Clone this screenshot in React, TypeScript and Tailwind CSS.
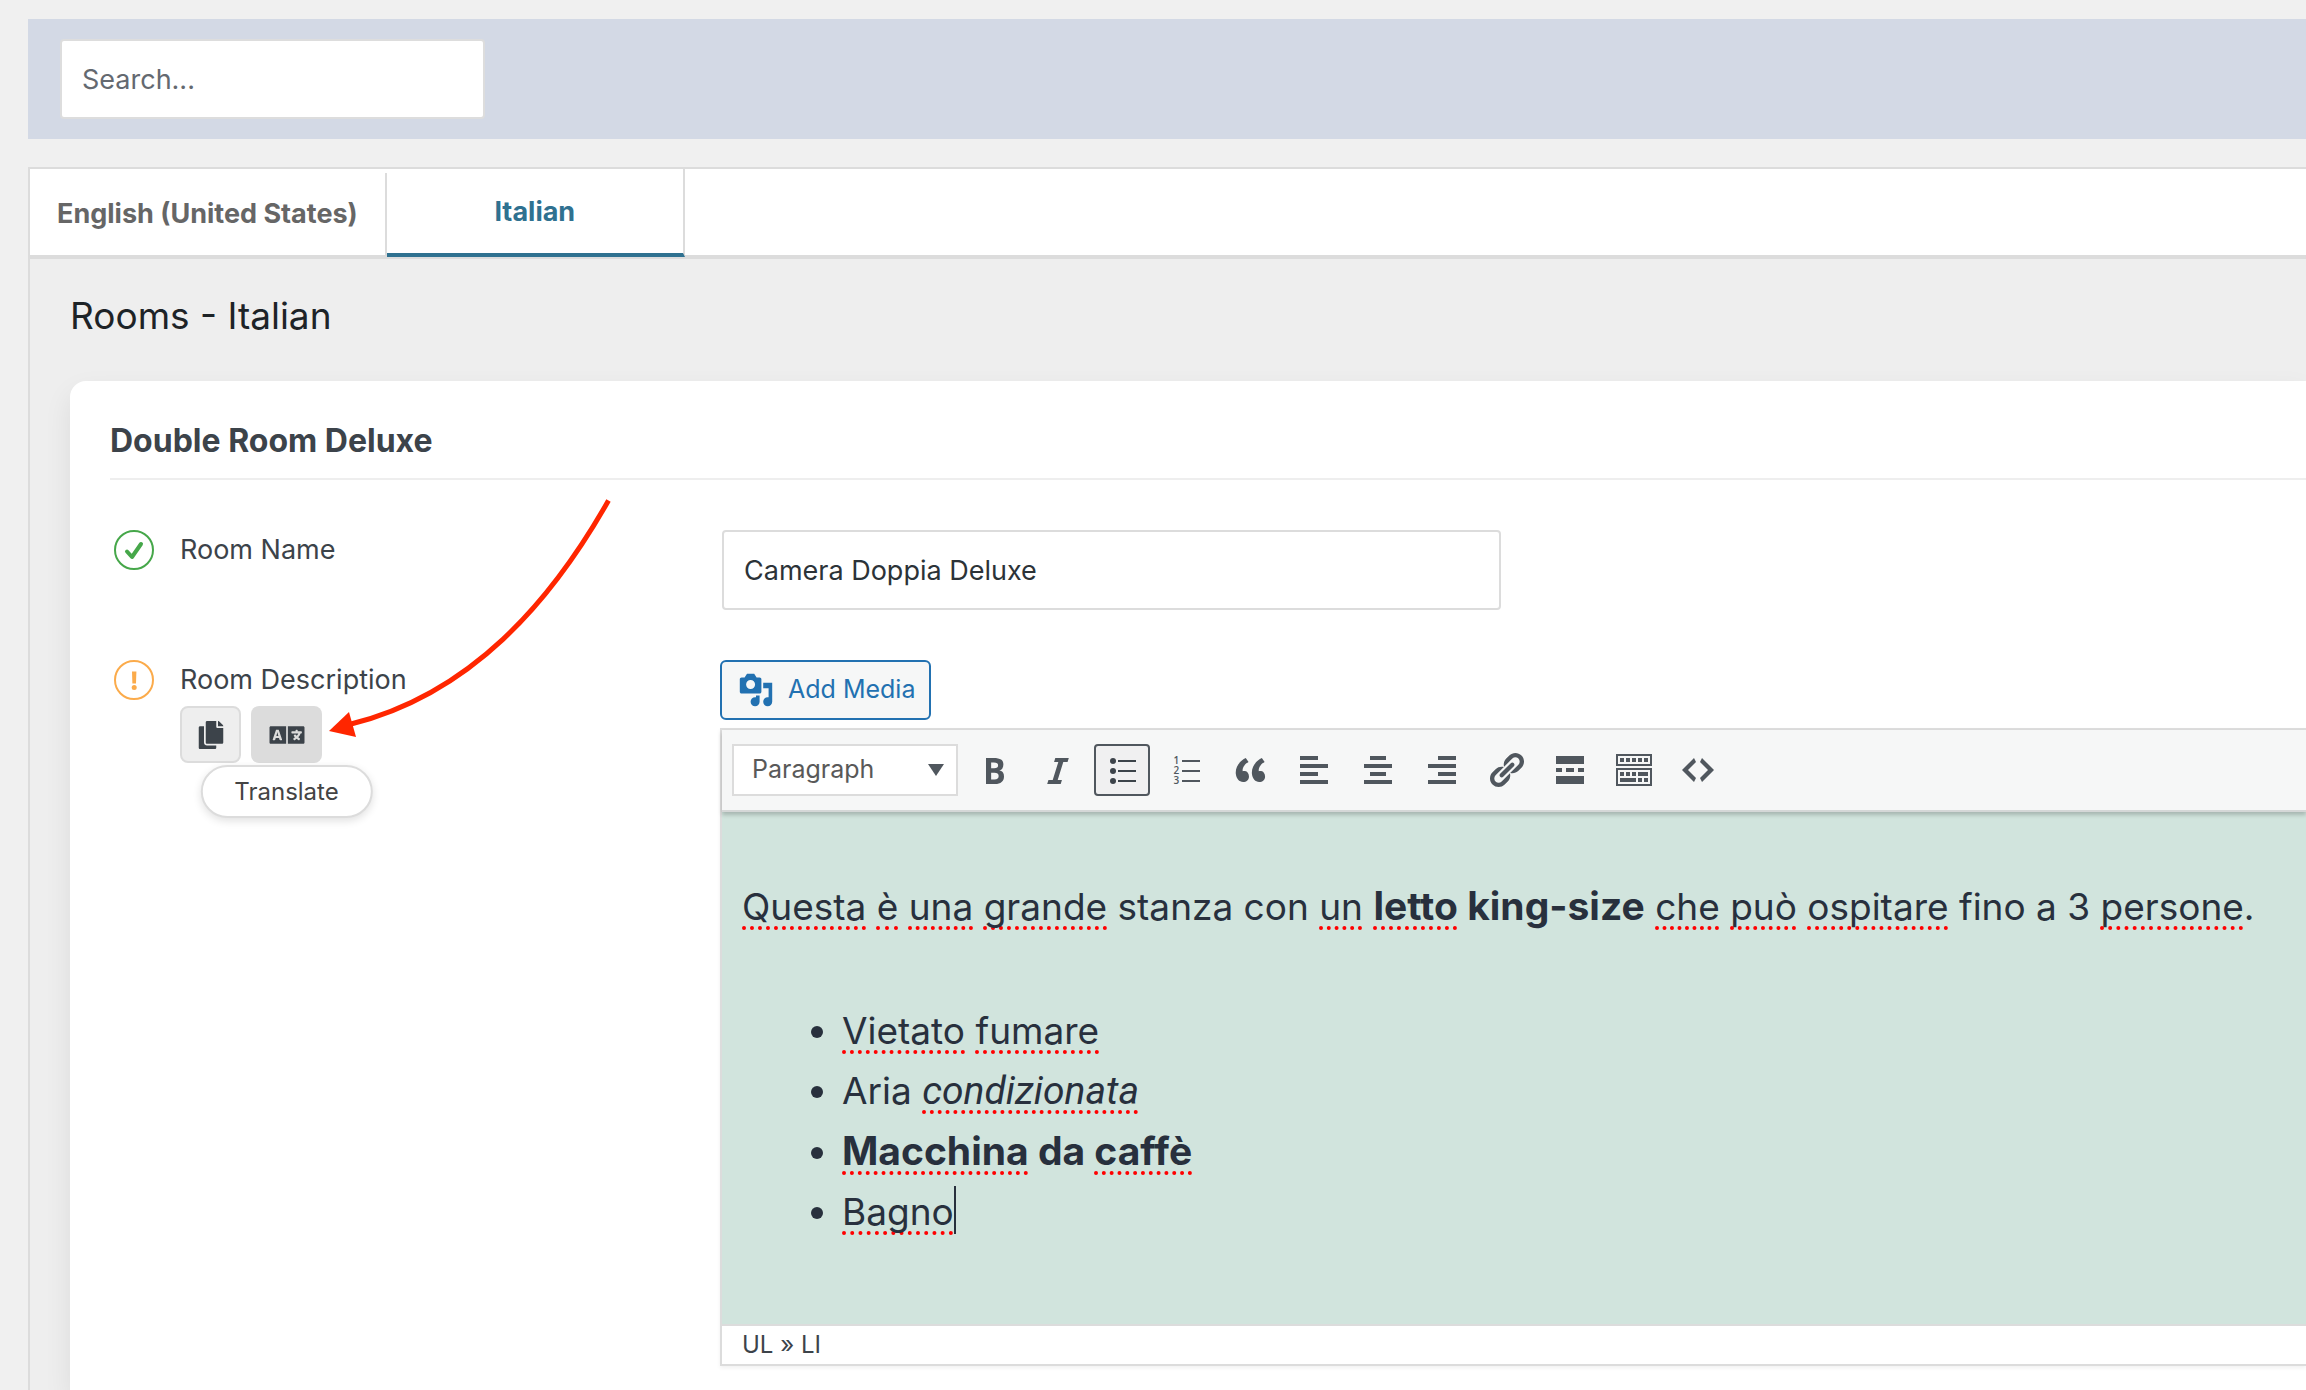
import type { ReactNode } from 'react'
import { FaCopy, FaLanguage } from 'react-icons/fa'

interface Tool {
  label: string
  icon: ReactNode
  active?: boolean
}

const TOOLS: Tool[] = [
  {
    label: 'Bold',
    icon: (
      <path d="M6 4v13h4.54c1.37 0 2.46-.33 3.26-1 .8-.66 1.2-1.58 1.2-2.77 0-.84-.17-1.51-.51-2.01s-.9-.85-1.67-1.03v-.09c.57-.1 1.02-.4 1.36-.9s.51-1.13.51-1.91c0-1.14-.39-1.98-1.17-2.5C12.75 4.26 11.5 4 9.78 4H6zm2.57 5.15V6.26h1.36c.73 0 1.27.11 1.61.32.34.22.51.58.51 1.07 0 .54-.16.92-.47 1.15s-.82.35-1.51.35h-1.5zm0 2.19h1.6c1.44 0 2.16.53 2.16 1.61 0 .6-.17 1.05-.51 1.34s-.86.43-1.57.43H8.57v-3.38z" />
    ),
  },
  {
    label: 'Italic',
    icon: <path d="M14.78 6h-2.13l-2.8 9h2.12l-.62 2H4.6l.62-2h2.14l2.8-9H8.03l.62-2h6.75z" />,
  },
  {
    label: 'Bulleted list',
    active: true,
    icon: (
      <>
        <circle cx="5.5" cy="5.5" r="1.5" />
        <circle cx="5.5" cy="10.5" r="1.5" />
        <circle cx="5.5" cy="15.5" r="1.5" />
        <path d="M8 5h9v1H8zM8 10h9v1H8zM8 15h9v1H8z" />
      </>
    ),
  },
  {
    label: 'Numbered list',
    icon: (
      <>
        <g className="font-['Open_Sans',sans-serif] text-[5px] font-semibold">
          <text x="3.8" y="7">1</text>
          <text x="3.8" y="12">2</text>
          <text x="3.8" y="17">3</text>
        </g>
        <path d="M8 5h9v1H8zM8 10h9v1H8zM8 15h9v1H8z" />
      </>
    ),
  },
  {
    label: 'Blockquote',
    icon: (
      <path d="M9.49 13.22c0-.74-.2-1.38-.61-1.9-.62-.78-1.83-.88-2.53-.72-.29-1.65 1.11-3.75 2.92-4.65L7.88 4c-2.73 1.3-5.42 4.28-4.96 8.05C3.21 14.43 4.59 16 6.54 16c.85 0 1.56-.25 2.12-.75s.83-1.18.83-2.03zm8.05 0c0-.74-.2-1.38-.61-1.9-.63-.78-1.83-.88-2.53-.72-.29-1.65 1.11-3.75 2.92-4.65L15.93 4c-2.73 1.3-5.41 4.28-4.95 8.05.28 2.38 1.66 3.95 3.61 3.95.85 0 1.56-.25 2.12-.75s.83-1.18.83-2.03z" />
    ),
  },
  { label: 'Align left', icon: <path d="M12 5V3H3v2h9zm5 4V7H3v2h14zm-5 4v-2H3v2h9zm5 4v-2H3v2h14z" /> },
  { label: 'Align center', icon: <path d="M14 5V3H6v2h8zm3 4V7H3v2h14zm-3 4v-2H6v2h8zm3 4v-2H3v2h14z" /> },
  { label: 'Align right', icon: <path d="M17 5V3H8v2h9zm0 4V7H3v2h14zm0 4v-2H8v2h9zm0 4v-2H3v2h14z" /> },
  {
    label: 'Insert link',
    icon: (
      <path d="M17.74 2.76c1.68 1.69 1.68 4.41 0 6.1l-1.53 1.52c-1.12 1.12-2.7 1.47-4.14 1.09l2.62-2.61.76-.77.76-.76c.84-.84.84-2.2 0-3.04-.84-.85-2.2-.85-3.04 0l-.77.76-3.38 3.38c-.37-1.44-.02-3.02 1.1-4.14l1.52-1.53c1.69-1.68 4.42-1.68 6.1 0zM8.59 13.43l5.34-5.34c.42-.42.42-1.1 0-1.52-.44-.43-1.13-.39-1.53 0l-5.33 5.34c-.42.42-.42 1.1 0 1.52.44.43 1.13.39 1.52 0zm-.76 2.29l4.14-4.15c.38 1.44.03 3.02-1.09 4.14l-1.52 1.53c-1.69 1.68-4.41 1.68-6.1 0-1.68-1.68-1.68-4.42 0-6.1l1.53-1.52c1.12-1.12 2.7-1.47 4.14-1.1l-4.14 4.15c-.85.84-.85 2.2 0 3.05.84.84 2.2.84 3.04 0z" />
    ),
  },
  { label: 'Read more', icon: <path d="M17 7V3H3v4h14zM6 11V9H3v2h3zm6 0V9H8v2h4zm5 0V9h-3v2h3zm0 6v-4H3v4h14z" /> },
  {
    label: 'Toolbar toggle',
    icon: (
      <path
        fillRule="evenodd"
        d="M1 2h18v6H1zM2 3v4h16V3zM3 4h2v2H3zM6 4h2v2H6zM9 4h2v2H9zM12 4h2v2h-2zM15 4h2v2h-2zM1 9h18v9H1zM2 10v7h16v-7zM3 11h2v2H3zM6 11h2v2H6zM9 11h2v2H9zM12 11h5v2h-5zM3 14h8v2H3zM12 14h2v2h-2zM15 14h2v2h-2z"
      />
    ),
  },
  { label: 'Source code', icon: <path d="M9 6l-4 4 4 4-1 2-6-6 6-6zm2 8l4-4-4-4 1-2 6 6-6 6z" /> },
]

// Word flagged by the spell checker
function Misspelled({ children }: { children: ReactNode }) {
  return (
    <span className="underline decoration-[#f00] decoration-dotted decoration-[4px] underline-offset-[6px] [text-decoration-skip-ink:none]">
      {children}
    </span>
  )
}

function TopBar() {
  return (
    <div className="bg-[#d3d9e5] py-5 pl-8">
      <input
        type="text"
        aria-label="Search"
        placeholder="Search..."
        className="block h-20 w-[425px] rounded border-2 border-[#ddd] bg-white px-5 text-[27px] placeholder:text-[#646970] placeholder:opacity-100"
      />
    </div>
  )
}

function LanguageTabs() {
  return (
    <div role="tablist" className="flex h-[90px] border-b-4 border-[#dcdcdc] bg-white text-[27px] font-bold">
      <button type="button" role="tab" className="mt-1 border-r-2 border-[#dcdcdc] px-[27px] text-[#666]">
        English (United States)
      </button>
      <button
        type="button"
        role="tab"
        aria-selected="true"
        className="-mb-0.5 w-[298px] border-r-2 border-b-4 border-r-[#dcdcdc] border-b-[#2f7190] pt-0.5 text-[#2f7190]"
      >
        Italian
      </button>
    </div>
  )
}

function StatusIcon({ done }: { done?: boolean }) {
  return (
    <svg viewBox="0 0 40 40" className="ml-1 size-10 shrink-0" fill="none" strokeLinecap="round" strokeLinejoin="round">
      <circle cx="20" cy="20" r="19" stroke={done ? '#46a74a' : '#fbab4b'} strokeWidth="2" />
      {done ? (
        <path d="M13 21.5l5 5.5 9-13" stroke="#46a74a" strokeWidth="4" />
      ) : (
        <>
          <path d="M18 11.5h4.4l-.4 12h-3.6z" fill="#fbab4b" />
          <circle cx="20.2" cy="27.5" r="2.5" fill="#fbab4b" />
        </>
      )}
    </svg>
  )
}

function RowActions() {
  return (
    <div className="mt-1.5 flex gap-2.5">
      <button
        type="button"
        aria-label="Copy"
        className="flex h-[57px] w-[61px] items-center justify-center rounded-lg border-2 border-[#dcdcdc] bg-[#eee]"
      >
        <FaCopy className="size-7" />
      </button>
      <div className="relative">
        <button
          type="button"
          aria-label="Translate"
          className="flex h-[57px] w-[71px] items-center justify-center rounded-lg bg-[#dcdcdc]"
        >
          <FaLanguage className="h-7 w-9" />
        </button>
        <div
          role="tooltip"
          className="absolute top-full left-1/2 mt-0.5 -translate-x-1/2 rounded-full border-2 border-[#dcdcdc] bg-white px-8 text-2xl leading-[49px] text-[#444] shadow-[0_3px_8px_rgba(0,0,0,0.12)]"
        >
          Translate
        </div>
      </div>
    </div>
  )
}

function Toolbar() {
  return (
    <div className="relative flex items-center gap-2 border-b-2 border-[#d5d7d7] bg-[#f6f7f7] px-2.5 py-3.5 shadow-[0_3px_4px_rgba(0,0,0,0.2)]">
      <div className="relative">
        <select
          aria-label="Block format"
          className="block h-[52px] w-[226px] appearance-none border-2 border-[#dcdcdc] bg-white px-[18px] text-[25px] text-[#595959]"
        >
          <option>Paragraph</option>
        </select>
        <svg viewBox="0 0 16 12" className="pointer-events-none absolute top-5 right-3.5 h-3 w-4 fill-[#50575e]">
          <path d="M0 0h16L8 12z" />
        </svg>
      </div>
      {TOOLS.map((tool) => (
        <button
          key={tool.label}
          type="button"
          aria-label={tool.label}
          aria-pressed={tool.active}
          className={`flex h-[52px] w-14 items-center justify-center rounded ${
            tool.active ? 'border-2 border-[#50575e] bg-[#f0f0f1] text-[#3c434a]' : 'text-[#50575e]'
          }`}
        >
          <svg viewBox="0 0 20 20" className="size-10 shrink-0 fill-current">
            {tool.icon}
          </svg>
        </button>
      ))}
    </div>
  )
}

function Editor() {
  return (
    <div>
      <button
        type="button"
        className="flex h-[60px] items-center gap-3.5 rounded-md border-2 border-[#2271b1] bg-[#f6f7f7] pr-3.5 pl-4 text-[25px] text-[#2271b1]"
      >
        <svg viewBox="0 0 20 20" className="size-9 fill-current">
          <path d="M13 11V4c0-.55-.45-1-1-1h-1.67L9 1H5L3.67 3H2c-.55 0-1 .45-1 1v7c0 .55.45 1 1 1h10c.55 0 1-.45 1-1zM7 4.5c1.38 0 2.5 1.12 2.5 2.5S8.38 9.5 7 9.5 4.5 8.38 4.5 7 5.62 4.5 7 4.5zM14 6h5v10.5c0 1.38-1.12 2.5-2.5 2.5S14 17.88 14 16.5s1.12-2.5 2.5-2.5c.17 0 .34.02.5.05V9h-3V6zm-4 8.05V13h2v3.5c0 1.38-1.12 2.5-2.5 2.5S7 17.88 7 16.5 8.12 14 9.5 14c.17 0 .34.02.5.05z" />
        </svg>
        Add Media
      </button>

      <div className="mt-2 border-y-2 border-l-2 border-[#dcdcdc] shadow-[0_2px_4px_rgba(0,0,0,0.06)]">
        <Toolbar />
        <div
          role="textbox"
          aria-label="Room Description"
          aria-multiline="true"
          className="h-[512px] bg-[#d1e4dd] px-5 pt-16 text-[37px] leading-[60px] whitespace-nowrap text-[#28303d]"
        >
          <p>
            <Misspelled>Questa</Misspelled> <Misspelled>è</Misspelled> <Misspelled>una</Misspelled>{' '}
            <Misspelled>grande</Misspelled> stanza con <Misspelled>un</Misspelled>{' '}
            <strong className="text-[39px]">
              <Misspelled>letto</Misspelled> king-size
            </strong>{' '}
            <Misspelled>che</Misspelled> <Misspelled>può</Misspelled> <Misspelled>ospitare</Misspelled> fino a 3{' '}
            <Misspelled>persone</Misspelled>.
          </p>
          <ul className="mt-16 list-disc pl-[100px]">
            <li>
              <Misspelled>Vietato</Misspelled> <Misspelled>fumare</Misspelled>
            </li>
            <li>
              Aria{' '}
              <em className="font-[Roboto,sans-serif] text-[39px]">
                <Misspelled>condizionata</Misspelled>
              </em>
            </li>
            <li>
              <strong className="text-[39px]">
                <Misspelled>Macchina</Misspelled> da <Misspelled>caffè</Misspelled>
              </strong>
            </li>
            <li>
              <Misspelled>Bagno</Misspelled>
              <span className="inline-block h-12 w-0.5 bg-[#28303d] align-[-9px]" />
            </li>
          </ul>
        </div>
        <div className="border-t-2 border-[#dcdcdc] bg-white px-5 text-2xl leading-[38px]">UL » LI</div>
      </div>
    </div>
  )
}

function CalloutArrow() {
  return (
    <svg viewBox="0 0 290 246" className="pointer-events-none absolute top-[115px] left-[255px] h-[246px] w-[290px]">
      <path d="M283.5 4.5C226 106 146 198 26 228" fill="none" stroke="#ff2600" strokeWidth="5" />
      <path d="M4 235L24 216L31 241z" fill="#ff2600" />
    </svg>
  )
}

export default function App() {
  return (
    <div className="flex min-h-screen flex-col gap-7 overflow-hidden bg-[#f0f0f0] pt-[19px] pl-7 font-[Inter,sans-serif] text-[#3c434a]">
      <TopBar />
      <main className="flex grow flex-col border-t-2 border-l-2 border-[#dcdcdc] bg-[#eee]">
        <LanguageTabs />
        <div className="flex grow flex-col pt-8 pl-10">
          <h1 className="text-[37px] leading-[50px] text-[#1d2327]">Rooms - Italian</h1>
          <section className="relative mt-10 grow rounded-tl-2xl bg-white pt-10 pl-10 shadow-[0_12px_28px_rgba(0,0,0,0.08)]">
            <h2 className="border-b-2 border-[#eee] pb-[17px] text-[32px] leading-10 font-bold">Double Room Deluxe</h2>

            <div className="mt-[50px] grid grid-cols-[610px_1fr] gap-y-[50px] text-[27px]">
              <div className="flex gap-[26px]">
                <StatusIcon done />
                <label htmlFor="room-name" className="leading-10">
                  Room Name
                </label>
              </div>
              <input
                id="room-name"
                type="text"
                defaultValue="Camera Doppia Deluxe"
                className="ml-0.5 h-20 w-[779px] rounded border-2 border-[#dcdcdc] bg-white px-5 text-[#2c3338]"
              />

              <div className="flex gap-[26px]">
                <StatusIcon />
                <div>
                  <div className="leading-10">Room Description</div>
                  <RowActions />
                </div>
              </div>
              <Editor />
            </div>

            <CalloutArrow />
          </section>
        </div>
      </main>
    </div>
  )
}
